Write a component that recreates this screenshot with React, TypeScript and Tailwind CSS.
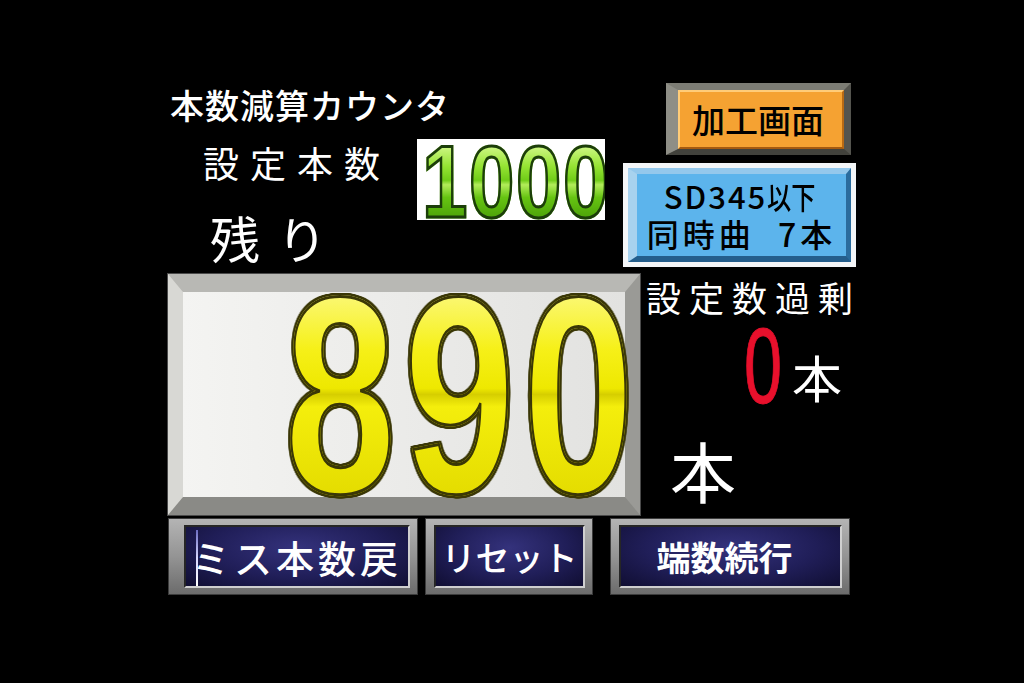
import React from "react";

const jp = "font-['Noto_Sans_CJK_JP','Noto_Sans_CJK_SC',sans-serif]";
const num = "font-['Liberation_Sans',Arial,sans-serif]";

function NavBtn({ className, padL, children, mark }: { className: string; padL: string; children: React.ReactNode; mark?: boolean }) {
  return (
    <div className={`${className} ${padL} h-[77px] pt-[6px] pr-[7px] pb-[6px] border border-[#3c3c3c] bg-linear-to-b from-[#b4b4b4] via-[#949494] to-[#6c6c6c]`}>
      <div className="relative h-full border-2 border-t-[#262626] border-l-[#262626] border-r-[#cfcfcf] border-b-[#cfcfcf] bg-[radial-gradient(ellipse_at_50%_35%,#34327c_0%,#201e58_55%,#100e32_100%)] flex items-center justify-center">
        {mark && <span className="absolute left-[10px] top-[3px] h-[56px] w-[2px] bg-linear-to-b from-[#6c6cc0] via-[#d8d8ff] to-[#ffffff]" />}
        {children}
      </div>
    </div>
  );
}

export default function App() {
  return (
    <div className={`w-[1024px] h-[683px] bg-black overflow-hidden text-white ${jp}`}>
      <div className="pt-[83px] pl-[168px] w-[857px] flex flex-col">
        {/* top row */}
        <div className="flex h-[184px]">
          <div className="w-[456px] flex flex-col">
            <div className="ml-[2px] mt-[5px] text-[34px] leading-none font-medium tracking-[1px]">本数減算カウンタ</div>
            <div className="mt-[17px] flex">
              <div className="w-[249px] flex flex-col">
                <div className="ml-[35px] mt-[5px] text-[36px] leading-none tracking-[11px]">設定本数</div>
                <div className="ml-[42px] mt-[32px] text-[50px] leading-none tracking-[17px]">残り</div>
              </div>
              <div className="w-[188px] h-[81px] bg-white overflow-hidden flex items-start pt-[6px] pl-[5px]">
                <span className={`shrink-0 origin-left scale-x-[0.8] tracking-[2px] ${num} font-bold text-[102px] leading-[75px] text-transparent bg-clip-text bg-[linear-gradient(180deg,#d2f88a_0%,#96e434_28%,#70cc18_47%,#b2ec5a_53%,#66c412_70%,#4aa008_100%)] [-webkit-text-stroke:3px_#1c3e0a]`}>1000</span>
              </div>
            </div>
          </div>
          <div className="w-[233px] flex flex-col">
            <div className="ml-[42px] w-[185px] h-[72px] border-t-[7px] border-l-[12px] border-r-[7px] border-b-[6px] border-t-[#7c7c74] border-l-[#8e8e86] border-r-[#54544e] border-b-[#42423c]">
              <div className="h-full border-2 border-t-[#ffcc78] border-l-[#ffcc78] border-r-[#b86a14] border-b-[#a45a10] bg-[#f5a232] flex items-center justify-center pr-[6px]">
                <span className="text-[33px] leading-none font-medium text-black">加工画面</span>
              </div>
            </div>
            <div className="mt-[8px] -ml-[1px] w-[233px] h-[104px] border-[5px] border-[#f4f6f8]">
              <div className="h-full border-t-[6px] border-l-[9px] border-r-[5px] border-b-[6px] border-t-[#94c8ec] border-l-[#a8d2ee] border-r-[#2a6c9e] border-b-[#245e8c] bg-[#5cb4ec] flex flex-col items-center justify-center text-black">
                <div className="text-[31px] leading-[36px] whitespace-nowrap font-medium">
                  <span className="tracking-[2px]">SD345</span>
                  <span className="inline-block origin-left scale-x-[0.78] w-[52px] whitespace-nowrap">以下</span>
                </div>
                <div className="text-[32px] leading-[38px] tracking-[4px] [word-spacing:12px] whitespace-nowrap font-medium">同時曲 7本</div>
              </div>
            </div>
          </div>
        </div>

        {/* middle row */}
        <div className="mt-[7px] flex h-[241px]">
          <div className="w-[472px] h-[241px] border-t-[18px] border-l-[15px] border-r-[15px] border-b-[18px] border-t-[#b8b8b4] border-l-[#d8d8d4] border-r-[#9a9a96] border-b-[#8a8a86] outline outline-1 outline-[#4a4a4a] bg-linear-to-r from-[#f4f4f2] to-[#e2e2e0] flex justify-end">
            <span className={`shrink-0 origin-right scale-x-[0.71] tracking-[12px] -mr-[17px] ${num} font-bold text-[280px] leading-[206px] text-transparent bg-clip-text bg-[linear-gradient(180deg,#fbf878_0%,#f6f018_28%,#eee800_47%,#d6ce00_50%,#f4ee0c_56%,#e4dc00_100%)] [-webkit-text-stroke:3px_#3a3706] [filter:drop-shadow(2px_0_0_#3a3706)_drop-shadow(-2px_0_0_#3a3706)_drop-shadow(0_2px_0_#3a3706)_drop-shadow(0_-2px_0_#3a3706)]`}>890</span>
          </div>
          <div className="w-[217px] flex flex-col">
            <div className="ml-[6px] mt-[5px] text-[35px] leading-none tracking-[8px] whitespace-nowrap">設定数過剰</div>
            <div className="mt-[13px] flex items-start">
              <div className="ml-[104px] w-[48px]">
                <span className={`inline-block origin-left scale-x-[0.64] ${num} font-normal text-[107px] leading-[79px] text-[#e8102c] [-webkit-text-stroke:1px_#e8102c]`}>0</span>
              </div>
              <span className="mt-[24px] text-[50px] leading-none">本</span>
            </div>
            <div className="ml-[30px] mt-[28px] text-[66px] leading-none">本</div>
          </div>
        </div>

        {/* bottom row */}
        <div className="mt-[3px] flex">
          <NavBtn className="w-[250px]" padL="pl-[15px]" mark>
            <span className="text-[38px] leading-none tracking-[4px] font-medium whitespace-nowrap">ミス本数戻</span>
          </NavBtn>
          <NavBtn className="ml-[7px] w-[168px]" padL="pl-[8px]">
            <span className="text-[34px] leading-none font-medium whitespace-nowrap">リセット</span>
          </NavBtn>
          <NavBtn className="ml-[17px] w-[240px]" padL="pl-[8px]">
            <span className="text-[34px] leading-none font-bold whitespace-nowrap pr-[12px]">端数続行</span>
          </NavBtn>
        </div>
      </div>
    </div>
  );
}
